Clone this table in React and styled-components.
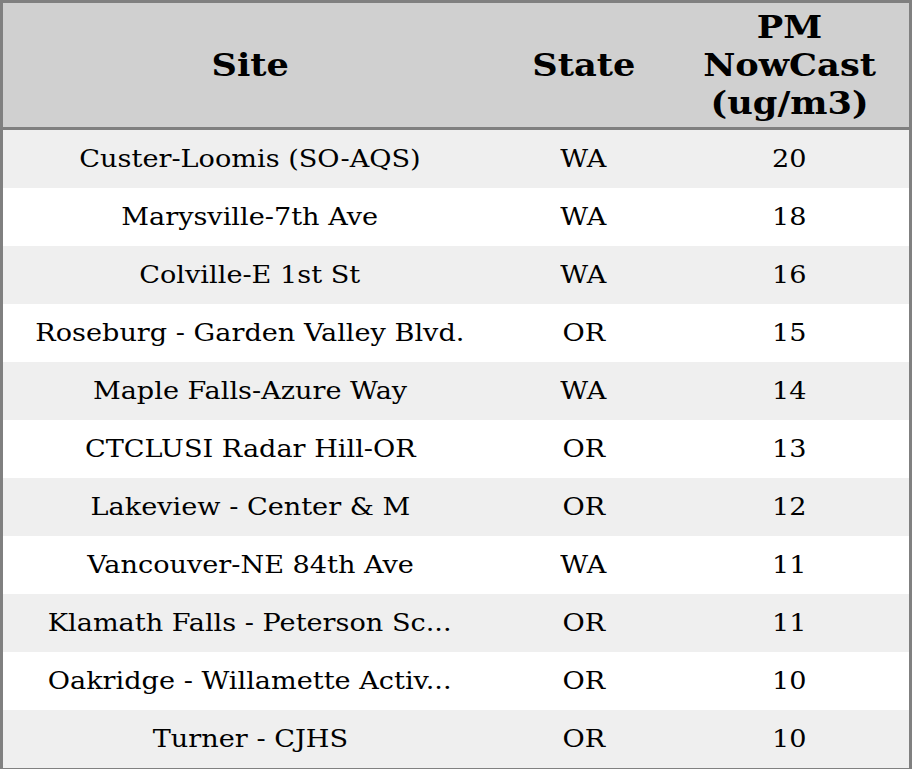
import React from "react";
import styled, { createGlobalStyle } from "styled-components";

const rows = [
	{ site: "Custer-Loomis (SO-AQS)", state: "WA", value: 20 },
	{ site: "Marysville-7th Ave", state: "WA", value: 18 },
	{ site: "Colville-E 1st St", state: "WA", value: 16 },
	{ site: "Roseburg - Garden Valley Blvd.", state: "OR", value: 15 },
	{ site: "Maple Falls-Azure Way", state: "WA", value: 14 },
	{ site: "CTCLUSI Radar Hill-OR", state: "OR", value: 13 },
	{ site: "Lakeview - Center & M", state: "OR", value: 12 },
	{ site: "Vancouver-NE 84th Ave", state: "WA", value: 11 },
	{ site: "Klamath Falls - Peterson School", state: "OR", value: 11 },
	{ site: "Oakridge - Willamette Activity Center", state: "OR", value: 10 },
	{ site: "Turner - CJHS", state: "OR", value: 10 },
];

// long names get cut in the data, not by css
const shorten = (name) => (name.length > 30 ? name.slice(0, 27) + "..." : name);

const App = () => {
	return (
		<>
			<GlobalStyle />
			<Table>
				<colgroup>
					<col style={{ width: 494 }} />
					<col style={{ width: 172 }} />
					<col style={{ width: 240 }} />
				</colgroup>
				<thead>
					<tr>
						<Th>
							<Wide $scale={1.1}>Site</Wide>
						</Th>
						<Th>
							<Wide $scale={1.1}>State</Wide>
						</Th>
						<Th>
							<Wide $scale={1.1}>
								PM
								<br />
								NowCast
								<br />
								(ug/m3)
							</Wide>
						</Th>
					</tr>
				</thead>
				<tbody>
					{rows.map((row, i) => (
						<Row key={i} $striped={i % 2 === 0}>
							<Td>
								<Wide $scale={1.13}>{shorten(row.site)}</Wide>
							</Td>
							<Td>
								<Wide $scale={1.13}>{row.state}</Wide>
							</Td>
							<Td>
								<Wide $scale={1.13}>{row.value}</Wide>
							</Td>
						</Row>
					))}
				</tbody>
			</Table>
		</>
	);
};

const GlobalStyle = createGlobalStyle`
	body {
		margin: 0;
		background: #fff;
		font-family: "DejaVu Serif", serif;
		color: #000;
	}
`;

const Table = styled.table`
	width: 912px;
	table-layout: fixed;
	border-collapse: collapse;
	border: 3px solid #808080;
`;

const Th = styled.th`
	height: 124px;
	padding: 0;
	background-color: #d0d0d0;
	border-bottom: 3px solid #808080;
	font-size: 32px;
	font-weight: 700;
	line-height: normal;
	text-align: center;
	vertical-align: middle;
`;

const Row = styled.tr`
	background-color: ${({ $striped }) => ($striped ? "#efefef" : "#fff")};
`;

const Td = styled.td`
	height: 58px;
	padding: 0;
	font-size: 24px;
	text-align: center;
	vertical-align: middle;
	white-space: nowrap;
`;

// the text in this table is drawn a little wider than the font's own glyphs
const Wide = styled.span`
	display: inline-block;
	transform: scaleX(${({ $scale }) => $scale});
`;

export default App;
